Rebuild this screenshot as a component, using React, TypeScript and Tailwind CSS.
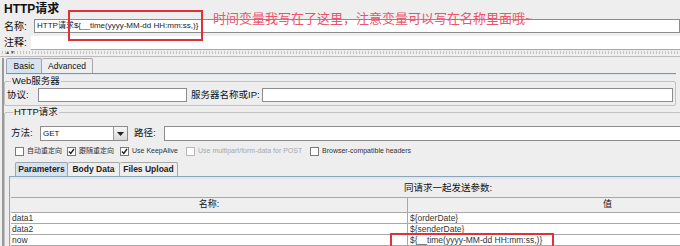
import React from 'react';

const cjk = '"Liberation Sans", "Noto Sans CJK SC", sans-serif';

function Box({ checked, disabled }: { checked?: boolean; disabled?: boolean }) {
  return (
    <span
      className={`w-[9px] h-[9px] border flex items-center justify-center bg-white ${
        disabled ? 'border-[#b8b8b8]' : 'border-[#7a7a7a]'
      }`}
    >
      {checked && (
        <svg width="7" height="7" viewBox="0 0 7 7">
          <path d="M1 3.5 L2.8 5.5 L6 1" stroke="#222" strokeWidth="1.4" fill="none" />
        </svg>
      )}
    </span>
  );
}

function Check({ label, checked, disabled, w }: { label: string; checked?: boolean; disabled?: boolean; w: string }) {
  return (
    <div className={`flex items-center gap-[3px] ${w}`}>
      <Box checked={checked} disabled={disabled} />
      <span className={`text-[7px] whitespace-nowrap ${disabled ? 'text-[#a8a8a8]' : 'text-[#333]'}`}>{label}</span>
    </div>
  );
}

export default function App() {
  return (
    <div
      className="relative w-[680px] h-[246px] overflow-hidden bg-[#eeeeef] text-[#111]"
      style={{ fontFamily: cjk }}
    >
      {/* header */}
      <div className="h-[18px] pl-[4px] pt-[2px] text-[12px] leading-[14px] font-semibold">HTTP请求</div>

      <div className="flex items-center h-[16px]">
        <span className="w-[34px] pl-[4px] text-[10px]">名称:</span>
        <div className="flex-1 h-[14px] border border-[#8c8c8c] bg-white text-[8px] leading-[12px] pl-[2px] text-[#222]">
          HTTP请求{'${__time(yyyy-MM-dd HH:mm:ss,)}'}
        </div>
      </div>

      <div className="flex items-center h-[15px] mt-[1px]">
        <span className="w-[31px] pl-[4px] text-[10px]">注释:</span>
        <div className="flex-1 h-[14px] bg-white border-b border-[#a8a8a8]" />
      </div>

      {/* splitter */}
      <div className="relative h-[6px] border-b border-[#bdbdbd]">
        <div className="h-[3px] mt-[1px] mx-[2px] bg-[repeating-linear-gradient(90deg,#c6c6c6_0_1px,transparent_1px_3px)]" />
        <span className="absolute left-[5px] top-[-2px] text-[5px] text-[#555]">▲▼</span>
      </div>

      {/* main panel */}
      <div className="ml-[2px] border-l-2 border-double border-[#9a9a9a] h-full">
        <div className="flex h-[15px] mt-[1px] ml-[2px] text-[8.5px]">
          <div className="w-[36px] bg-[#d6e2ee] border border-b-0 border-[#9aa6b4] rounded-t-[2px] flex items-center justify-center">
            Basic
          </div>
          <div className="w-[51px] border border-b-0 border-l-0 border-[#a8a8a8] rounded-t-[2px] flex items-center justify-center">
            Advanced
          </div>
        </div>
        <div className="ml-[2px] mr-[4px] border-t border-[#7f93a6] h-[2px] bg-[#dfe8f1]" />
        <div className="mr-[4px]">
          <fieldset className="border border-[#c2c2c2] rounded-[2px] px-[2px] pb-[3px]">
            <legend className="ml-[4px] text-[9.5px] leading-[12px] px-[1px]">Web服务器</legend>
            <div className="flex items-center h-[14px] mt-[1px]">
              <span className="w-[31px] text-[9.5px]">协议:</span>
              <div className="w-[149px] h-[14px] bg-white border border-[#8c8c8c]" />
              <span className="ml-[4px] w-[71px] text-[9.5px]">服务器名称或IP:</span>
              <div className="flex-1 h-[14px] bg-white border border-[#8c8c8c]" />
            </div>
          </fieldset>
          <fieldset className="border border-[#c2c2c2] rounded-[2px] pl-[4px] pr-[2px] h-[200px]">
            <legend className="ml-[4px] text-[9.5px] leading-[12px] px-[1px]">HTTP请求</legend>
            <div className="flex items-center h-[15px] mt-[8px]">
              <span className="w-[31px] text-[9.5px] pl-[2px]">方法:</span>
              <div className="flex w-[88px] h-[15px] border border-[#8c8c8c] bg-white">
                <span className="flex-1 text-[8px] leading-[13px] pl-[2px]">GET</span>
                <span className="w-[14px] border-l border-[#9a9a9a] bg-[linear-gradient(#f6f6f6,#d9d9d9)] flex items-center justify-center">
                  <svg width="7" height="4" viewBox="0 0 7 4">
                    <path d="M0 0 L7 0 L3.5 4 Z" fill="#222" />
                  </svg>
                </span>
              </div>
              <span className="ml-[6px] w-[30px] text-[9.5px]">路径:</span>
              <div className="flex-1 h-[15px] bg-white border border-[#8c8c8c]" />
            </div>
            <div className="flex items-center h-[10px] mt-[5px] ml-[6px]">
              <Check label="自动重定向" w="w-[52px]" />
              <Check label="跟随重定向" checked w="w-[53px]" />
              <Check label="Use KeepAlive" checked w="w-[66px]" />
              <Check label="Use multipart/form-data for POST" disabled w="w-[124px]" />
              <Check label="Browser-compatible headers" w="w-[120px]" />
            </div>
            <div className="flex h-[14px] mt-[6px] ml-[6px] text-[8.5px] font-semibold text-[#222]">
              <div className="w-[53px] bg-[#d6e2ee] border border-b-0 border-[#9aa6b4] rounded-t-[2px] flex items-center justify-center">
                Parameters
              </div>
              <div className="w-[52px] border border-b-0 border-l-0 border-[#a8a8a8] rounded-t-[2px] flex items-center justify-center">
                Body Data
              </div>
              <div className="w-[58px] border border-b-0 border-l-0 border-[#a8a8a8] rounded-t-[2px] flex items-center justify-center">
                Files Upload
              </div>
            </div>
            <div className="border-l border-t border-[#8fa3b6] -mr-[10px]">
              <div className="h-[2px] bg-[#dfe8f1]" />
              <div className="h-[18px] flex items-center pl-[394px] text-[9.5px]">同请求一起发送参数:</div>
              <div className="w-[796px] ml-[1px] border-t border-[#a8a8a8] text-[8.5px]">
                <div className="flex h-[15px] border-b border-[#a8a8a8] bg-[#efefef]">
                  <div className="w-[397px] border-r border-[#a8a8a8] flex items-center justify-center text-[9px]">名称:</div>
                  <div className="flex-1 flex items-center justify-center text-[9px]">值</div>
                </div>
                {[
                  ['data1', '${orderDate}'],
                  ['data2', '${senderDate}'],
                  ['now', '${__time(yyyy-MM-dd HH:mm:ss,)}'],
                ].map(([k, v]) => (
                  <div key={k} className="flex h-[11px] border-b border-[#a8a8a8] bg-white leading-[10px]">
                    <div className="w-[397px] border-r border-[#a8a8a8] pl-[1px] text-[#333]">{k}</div>
                    <div className="flex-1 pl-[2px] text-[#333]">{v}</div>
                  </div>
                ))}
              </div>
            </div>
          </fieldset>
        </div>
      </div>

      {/* annotations */}
      <div className="absolute left-[68px] top-[10px] w-[135px] h-[31px] border-2 border-[#e0303c]" />
      <div className="absolute left-[213px] top-[11px] text-[13px] leading-[16px] text-[#e8556c] whitespace-nowrap">
        时间变量我写在了这里，注意变量可以写在名称里面哦~
      </div>
      <div className="absolute left-[390px] top-[233px] w-[164px] h-[20px] border-2 border-[#e0303c]" />
    </div>
  );
}
